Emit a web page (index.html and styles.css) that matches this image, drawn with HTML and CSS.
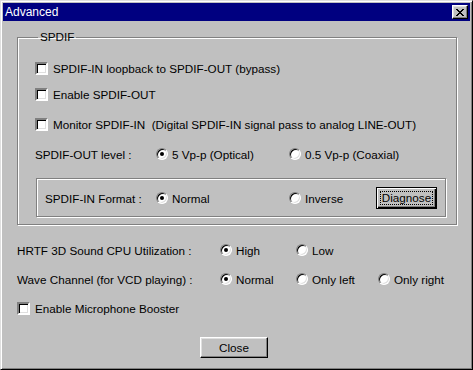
FILE: index.html
```html
<!DOCTYPE html>
<html lang="en">
<head>
    <meta charset="UTF-8">
    <title>Advanced</title>
    <link rel="stylesheet" href="styles.css">
</head>
<body>

    <div class="window">
        <div class="titlebar">
            <span class="title">Advanced</span>
            <button class="title-close">
                <svg width="8" height="7" viewBox="0 0 8 7" shape-rendering="crispEdges">
                    <path d="M0 0h2v1H0zM6 0h2v1H6zM1 1h2v1H1zM5 1h2v1H5zM2 2h4v1H2zM3 3h2v1H3zM2 4h4v1H2zM1 5h2v1H1zM5 5h2v1H5zM0 6h2v1H0zM6 6h2v1H6z" fill="#000"/>
                </svg>
            </button>
        </div>

        <div class="content">
            <fieldset class="group">
                <legend>SPDIF</legend>

                <div class="row row-first"><span class="check"></span>SPDIF-IN loopback to SPDIF-OUT (bypass)</div>
                <div class="row row-tight"><span class="check"></span>Enable SPDIF-OUT</div>
                <div class="row row-loose"><span class="check"></span>Monitor SPDIF-IN&nbsp; (Digital SPDIF-IN signal pass to analog LINE-OUT)</div>

                <div class="row row-loose">
                    <span class="field-label label-level">SPDIF-OUT level :</span>
                    <span class="option opt-wide"><span class="radio checked"></span>5 Vp-p (Optical)</span>
                    <span class="option"><span class="radio"></span>0.5 Vp-p (Coaxial)</span>
                </div>

                <div class="subgroup">
                    <span class="field-label label-format">SPDIF-IN Format :</span>
                    <span class="option opt-wide"><span class="radio checked"></span>Normal</span>
                    <span class="option opt-inverse"><span class="radio"></span>Inverse</span>
                    <button class="btn btn-default"><span class="focus">Diagnose</span></button>
                </div>
            </fieldset>

            <div class="row row-hrtf">
                <span class="field-label label-main">HRTF 3D Sound CPU Utilization :</span>
                <span class="option opt-short"><span class="radio checked"></span>High</span>
                <span class="option"><span class="radio"></span>Low</span>
            </div>

            <div class="row row-wave">
                <span class="field-label label-main">Wave Channel (for VCD playing) :</span>
                <span class="option opt-short"><span class="radio checked"></span>Normal</span>
                <span class="option opt-mid"><span class="radio"></span>Only left</span>
                <span class="option"><span class="radio"></span>Only right</span>
            </div>

            <div class="row row-wave"><span class="check"></span>Enable Microphone Booster</div>

            <div class="actions">
                <button class="btn">Close</button>
            </div>
        </div>
    </div>

</body>
</html>
```

FILE: styles.css
```css
body {
    margin: 0;
    background-color: #c0c0c0;
    font-family: "Liberation Sans", Arial, sans-serif;
    font-size: 11.7px;
    color: #000;
}
.window {
    width: 473px;
    height: 370px;
    box-sizing: border-box;
    padding: 2px;
    background-color: #c0c0c0;
    border: 1px solid;
    border-color: #dfdfdf #000 #000 #dfdfdf;
    box-shadow: inset 1px 1px 0 #fff, inset -1px -1px 0 #808080;
}
.titlebar {
    height: 18px;
    background-color: #000080;
    display: flex;
    align-items: center;
    justify-content: space-between;
    padding: 0 2px;
}
.title {
    color: #fff;
    font-size: 12px;
    line-height: 18px;
}
.title-close {
    width: 16px;
    height: 14px;
    padding: 0;
    margin: 0;
    background-color: #c0c0c0;
    border: 1px solid;
    border-color: #fff #000 #000 #fff;
    box-shadow: inset -1px -1px 0 #808080, inset 1px 1px 0 #dfdfdf;
    display: flex;
    align-items: center;
    justify-content: center;
}
.content {
    padding: 0 13px 0 14px;
}
.group {
    margin: 9px 0 0 0;
    padding: 0 10px 7px 17px;
    border: 1px solid #808080;
    box-shadow: inset 1px 1px 0 #fff, 1px 1px 0 #fff;
    min-width: 0;
}
.group legend {
    padding: 0 2px;
    margin-left: 3px;
    line-height: 14px;
}
.row {
    display: flex;
    align-items: center;
    height: 20px;
    white-space: nowrap;
}
.row-first {
    margin-top: 14px;
}
.row-tight {
    margin-top: 6px;
}
.row-loose {
    margin-top: 10px;
}
.check {
    width: 9px;
    height: 9px;
    flex: none;
    margin-right: 5px;
    background-color: #fff;
    border: 2px solid;
    border-color: #808080 #fff #fff #808080;
    box-shadow: inset 1px 1px 0 #000, inset -1px -1px 0 #dfdfdf;
}
.radio {
    position: relative;
    width: 10px;
    height: 10px;
    flex: none;
    margin-right: 4px;
    border-radius: 50%;
    background-color: #fff;
    border: 1px solid;
    border-color: #808080 #fff #fff #808080;
    box-shadow: inset 1px 1px 0 #000, inset -1px -1px 0 #dfdfdf;
}
.radio.checked::after {
    content: "";
    position: absolute;
    left: 3px;
    top: 3px;
    width: 4px;
    height: 4px;
    border-radius: 50%;
    background-color: #000;
}
.field-label {
    flex: none;
}
.label-level {
    width: 121px;
}
.label-format {
    width: 111px;
}
.label-main {
    width: 203px;
}
.option {
    display: flex;
    align-items: center;
    flex: none;
}
.opt-wide {
    width: 133px;
}
.opt-inverse {
    width: 87px;
}
.opt-short {
    width: 76px;
}
.opt-mid {
    width: 82px;
}
.subgroup {
    display: flex;
    align-items: center;
    height: 36px;
    margin: 14px 0 0 1px;
    padding: 1px 8px 0;
    border: 1px solid #808080;
    box-shadow: inset 1px 1px 0 #fff, 1px 1px 0 #fff;
    white-space: nowrap;
}
.btn {
    font-family: inherit;
    font-size: 11.7px;
    color: #000;
    background-color: #c0c0c0;
    border: 1px solid;
    border-color: #fff #000 #000 #fff;
    box-shadow: inset -1px -1px 0 #808080, inset 1px 1px 0 #dfdfdf;
    padding: 0;
    width: 68px;
    height: 21px;
}
.btn-default {
    width: 61px;
    height: 22px;
    border: 1px solid #000;
    box-shadow: inset 1px 1px 0 #fff, inset -1px -1px 0 #000, inset -2px -2px 0 #808080;
    padding: 3px;
}
.focus {
    display: block;
    border: 1px dotted #000;
    line-height: 12px;
}
.row-hrtf {
    margin-top: 15px;
}
.row-wave {
    margin-top: 9px;
}
.actions {
    margin-top: 19px;
    padding-left: 183px;
}
```
